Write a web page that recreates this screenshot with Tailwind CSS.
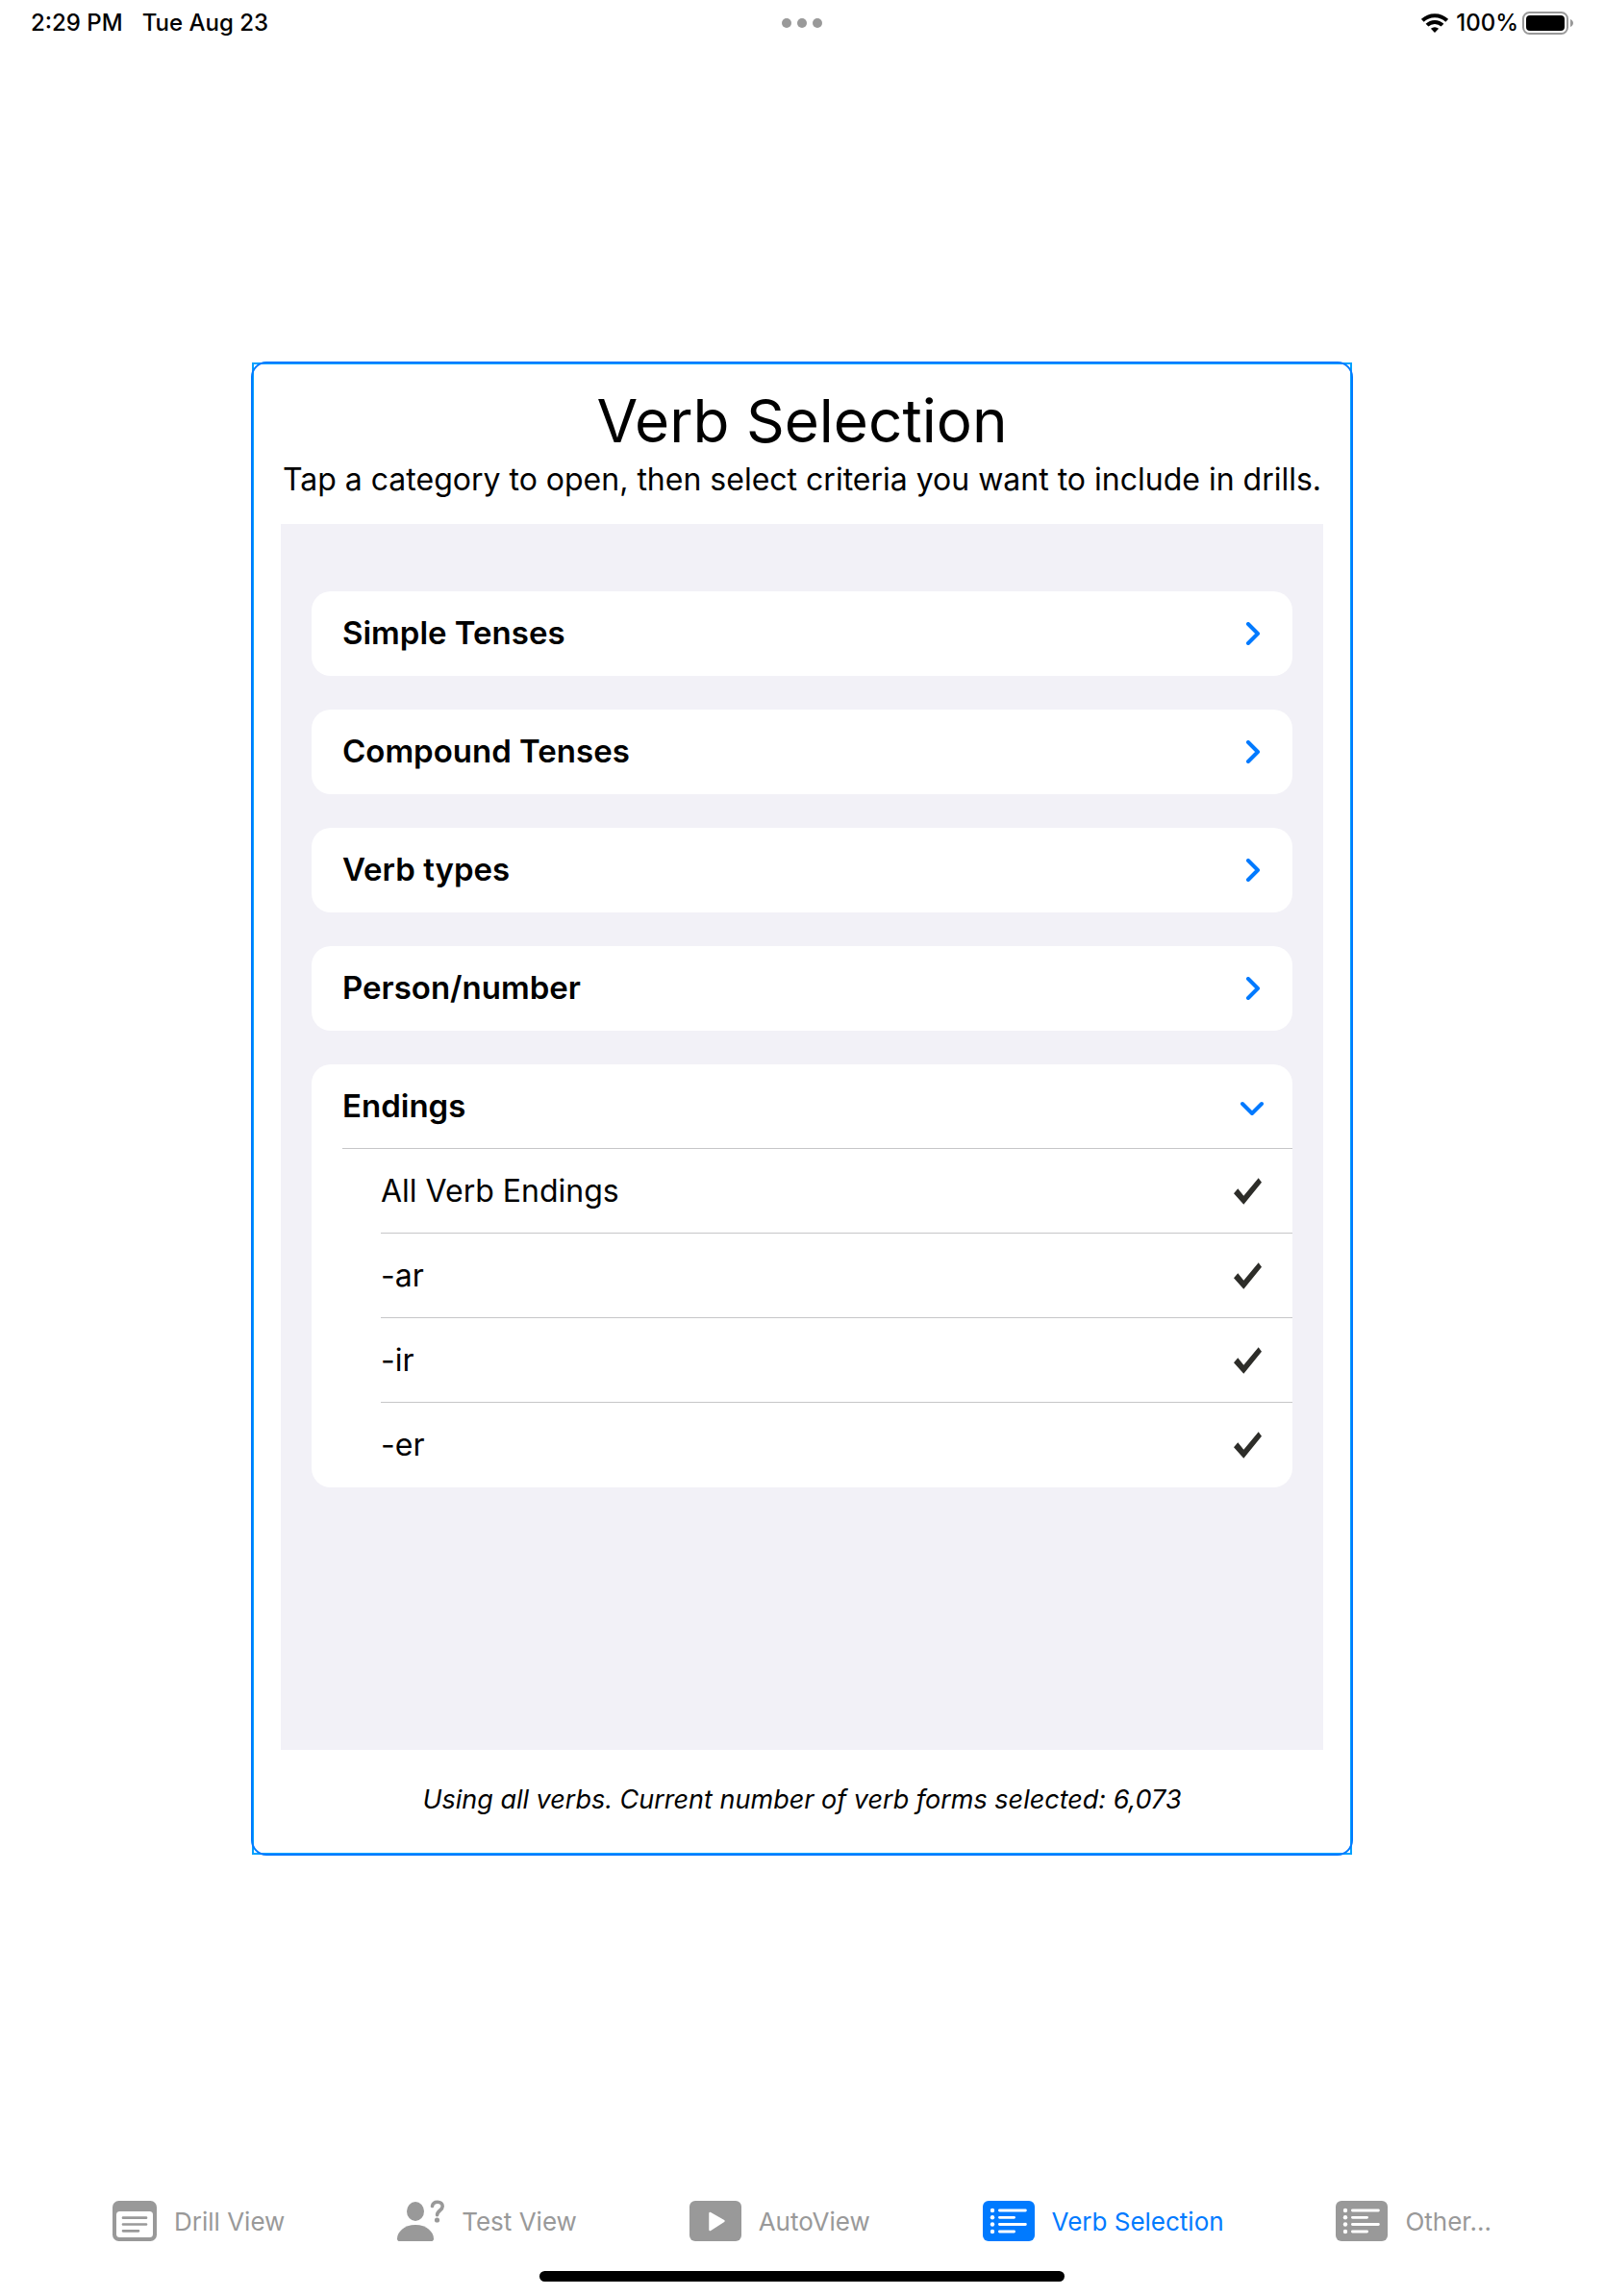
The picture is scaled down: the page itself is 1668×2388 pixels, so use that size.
<!DOCTYPE html>
<html lang="en">
<head>
<meta charset="utf-8">
<meta name="viewport" content="width=device-width, initial-scale=1">
<title>Verb Selection</title>
<script src="https://cdn.jsdelivr.net/npm/@tailwindcss/browser@4"></script>
</head>
<body class="flex min-h-screen flex-col bg-white font-['Inter',sans-serif] text-black">

<!-- Shared shapes -->
<svg class="hidden" aria-hidden="true">
  <symbol id="chevron" viewBox="0 0 24 24"><path d="M7 2 L17 12 L7 22" fill="none" stroke="currentColor" stroke-width="4" stroke-linecap="round" stroke-linejoin="round"/></symbol>
  <symbol id="check" viewBox="0 0 29 28"><path d="M0 16.3 L4.3 11.3 L10.3 18.7 L25.7 .3 L29 4.7 L10.3 27.7Z" fill="currentColor"/></symbol>
  <symbol id="list" viewBox="0 0 54 42">
    <rect width="54" height="42" rx="6" fill="currentColor"/>
    <g fill="#fff"><circle cx="10" cy="10" r="2.2"/><circle cx="10" cy="17.3" r="2.2"/><circle cx="10" cy="24.5" r="2.2"/><circle cx="10" cy="32" r="2.2"/></g>
    <path d="M17.4 10H44.4M17.4 17.3H32.6M17.4 24.5H44.4M17.4 32H32.6" stroke="#fff" stroke-width="2.8" stroke-linecap="round"/>
  </symbol>
</svg>

<header class="grid h-12 grid-cols-3 items-center px-8 text-[24px] leading-none font-medium">
  <div class="flex gap-5"><span>2:29 PM</span><span>Tue Aug 23</span></div>
  <button type="button" aria-label="Multitasking" class="flex gap-1.5 justify-self-center">
    <span class="size-2.5 rounded-full bg-[#999]"></span><span class="size-2.5 rounded-full bg-[#999]"></span><span class="size-2.5 rounded-full bg-[#999]"></span>
  </button>
  <div class="flex items-center justify-end">
    <svg class="mr-2 h-5 w-7" viewBox="0 0 28 20" role="img" aria-label="Wi-Fi">
      <g fill="none" stroke="#000" stroke-width="4"><path d="M1.3 7.4 A18 18 0 0 1 26.7 7.4"/><path d="M6 12.2 A11.3 11.3 0 0 1 22 12.2"/></g>
      <path d="M14 20 L9.9 15.8 A6 6 0 0 1 18.1 15.8Z"/>
    </svg>
    <span>100%</span>
    <svg class="ml-1 h-6 w-[53px]" viewBox="0 0 53 24" role="img" aria-label="Battery full">
      <rect x="1" y="1" width="46" height="22" rx="6.5" fill="none" stroke="#999" stroke-width="2"/>
      <rect x="4" y="4" width="40" height="16" rx="4"/>
      <path d="M50 8 C54 9.5 54 14.5 50 16Z" fill="#999"/>
    </svg>
  </div>
</header>

<main class="flex flex-1 items-center justify-center">
  <section class="relative w-full max-w-[1146px] px-[31px] pt-[22px] pb-[42px]">
    <div class="pointer-events-none absolute inset-px border-2 border-[#00a2ff]"></div>
    <div class="pointer-events-none absolute inset-0 rounded-[16px] border-2 border-[#007aff]"></div>
    <h1 class="text-center text-[62px] leading-20">Verb Selection</h1>
    <p class="text-center text-[32px] leading-[42px] whitespace-nowrap">Tap a category to open, then select criteria you want to include in drills.</p>
    <div class="mt-[25px] flex min-h-[1275px] flex-col gap-[35px] bg-[#f2f1f7] px-8 py-[70px]">
      <button type="button" aria-expanded="false" class="flex h-[88px] items-center justify-between rounded-[20px] bg-white pr-[29px] pl-8 text-[33px] font-semibold">Simple Tenses<svg class="size-6 text-[#007aff]"><use href="#chevron"/></svg></button>
      <button type="button" aria-expanded="false" class="flex h-[88px] items-center justify-between rounded-[20px] bg-white pr-[29px] pl-8 text-[33px] font-semibold">Compound Tenses<svg class="size-6 text-[#007aff]"><use href="#chevron"/></svg></button>
      <button type="button" aria-expanded="false" class="flex h-[88px] items-center justify-between rounded-[20px] bg-white pr-[29px] pl-8 text-[33px] font-semibold">Verb types<svg class="size-6 text-[#007aff]"><use href="#chevron"/></svg></button>
      <button type="button" aria-expanded="false" class="flex h-[88px] items-center justify-between rounded-[20px] bg-white pr-[29px] pl-8 text-[33px] font-semibold">Person/number<svg class="size-6 text-[#007aff]"><use href="#chevron"/></svg></button>
      <div class="flex flex-col rounded-[20px] bg-white pl-8 text-[32px]">
        <button type="button" aria-expanded="true" class="flex h-[88px] items-center justify-between border-b border-[#c6c6c8] pr-[30px] text-[33px] font-semibold">Endings<svg class="mt-1 size-6 rotate-90 text-[#007aff]"><use href="#chevron"/></svg></button>
        <div class="pl-10">
          <label class="flex h-[88px] items-center justify-between border-b border-[#c6c6c8] pr-8">All Verb Endings<input type="checkbox" checked class="peer sr-only"><svg class="invisible h-7 w-[29px] text-[#2d2d29] peer-checked:visible"><use href="#check"/></svg></label>
          <label class="flex h-[88px] items-center justify-between border-b border-[#c6c6c8] pr-8">-ar<input type="checkbox" checked class="peer sr-only"><svg class="invisible h-7 w-[29px] text-[#2d2d29] peer-checked:visible"><use href="#check"/></svg></label>
          <label class="flex h-[88px] items-center justify-between border-b border-[#c6c6c8] pr-8">-ir<input type="checkbox" checked class="peer sr-only"><svg class="invisible h-7 w-[29px] text-[#2d2d29] peer-checked:visible"><use href="#check"/></svg></label>
          <label class="flex h-[88px] items-center justify-between pr-8">-er<input type="checkbox" checked class="peer sr-only"><svg class="invisible h-7 w-[29px] text-[#2d2d29] peer-checked:visible"><use href="#check"/></svg></label>
        </div>
      </div>
    </div>
    <p class="mt-9 text-center text-[27px] leading-8 italic">Using all verbs. Current number of verb forms selected: 6,073</p>
  </section>
</main>

<footer class="flex flex-col items-center gap-[29px] pt-[31px] pb-[15px]">
  <nav class="flex w-full justify-between px-[117px] text-[26px] leading-[44px] text-[#999]">
    <a href="#drill" class="flex gap-[18px]">
      <svg class="h-[42px] w-[46px]" viewBox="0 0 46 42"><rect width="46" height="42" rx="6.5" fill="currentColor"/><rect x="4" y="11" width="38" height="27" rx="3.5" fill="#fff"/><path d="M11 17.7H35M11 24.5H35M11 31.3H27" stroke="currentColor" stroke-width="2.7" stroke-linecap="round"/></svg>
      Drill View</a>
    <a href="#test" class="flex gap-[18px]">
      <svg class="h-[42px] w-[49px] overflow-visible" viewBox="0 0 49 42"><ellipse cx="19" cy="11" rx="9" ry="10" fill="currentColor"/><path d="M2.5 42 Q0 42 0 39.2 C0 33 7 25 19 25 S38 33 38 39.2 Q38 42 35.5 42Z" fill="currentColor"/><path d="M36.5 5.5 C37 2.500 39 1.3 42 1.3 C45 1.3 47.2 3 47.2 5.8 C47.2 10 41.6 10 41.6 14.7" fill="none" stroke="currentColor" stroke-width="3.6" stroke-linecap="round"/><circle cx="41.5" cy="20" r="2.6" fill="currentColor"/></svg>
      Test View</a>
    <a href="#auto" class="flex gap-[18px]">
      <svg class="h-[42px] w-[54px]" viewBox="0 0 54 42"><rect width="54" height="42" rx="6" fill="currentColor"/><path d="M21.5 13 L35.5 21 L21.5 30Z" fill="#fff" stroke="#fff" stroke-width="2.5" stroke-linejoin="round"/></svg>
      AutoView</a>
    <a href="#verbs" aria-current="page" class="flex gap-[18px] text-[#007aff]"><svg class="h-[42px] w-[54px]"><use href="#list"/></svg>Verb Selection</a>
    <a href="#other" class="flex gap-[18px]"><svg class="h-[42px] w-[54px]"><use href="#list"/></svg>Other...</a>
  </nav>
  <div class="h-[11px] w-[546px] rounded-full bg-black"></div>
</footer>
</body>
</html>
